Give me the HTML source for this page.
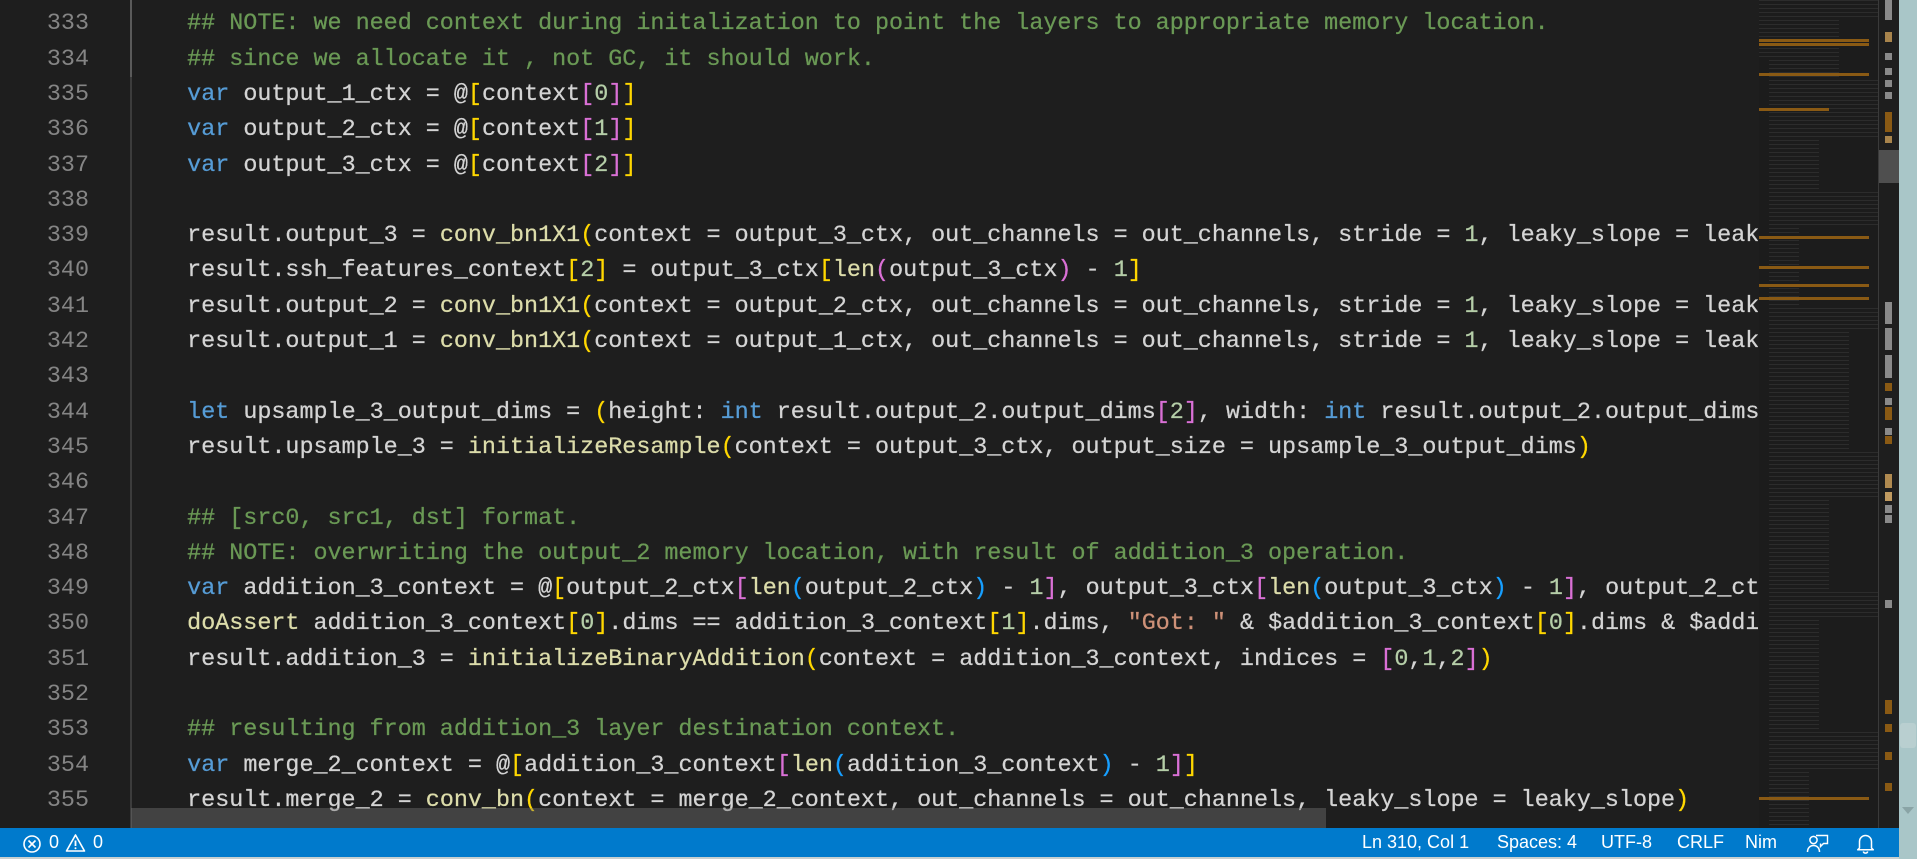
<!DOCTYPE html>
<html><head><meta charset="utf-8"><style>
*{margin:0;padding:0;box-sizing:border-box}
html,body{width:1917px;height:859px;overflow:hidden;background:#1e1e1e}
body{position:relative;font-family:"Liberation Mono",monospace}
#gut{position:absolute;left:0;top:0;width:131px;height:828px;background:#1e1e1e}
#div{position:absolute;left:130px;top:0;width:2px;height:828px;background:#3c3c3c}
#div2{position:absolute;left:130px;top:0;width:2px;height:77px;background:#5a5a5a}
.ln{position:absolute;left:0;top:7.4px;width:89px;text-align:right;color:#858585;font-size:23.4px;line-height:35.3px;font-family:"Liberation Mono",monospace}
#code{position:absolute;left:131px;top:7.4px;width:1627px;height:821px;overflow:hidden;font-size:23.4px;line-height:35.3px;color:#d4d4d4;white-space:pre;-webkit-text-stroke:0.25px}
.c{color:#6a9955}.k{color:#569cd6}.f{color:#dcdcaa}.n{color:#b5cea8}.s{color:#ce9178}
.g{color:#ffd700}.p{color:#da70d6}.b{color:#179fff}
#hs{position:absolute;left:131px;top:808px;width:1195px;height:20px;background:rgba(121,121,121,0.4)}
#mm{position:absolute;left:1759px;top:0;width:119px;height:828px;background:#1c1c1c;
background-image:repeating-linear-gradient(180deg,rgba(150,150,150,0.13) 0 1px,transparent 1px 4px);}
#mm .h{position:absolute;left:0;height:3px;background:#8a5a14}
#mm .cover{position:absolute;background:#1c1c1c}
#ovl{position:absolute;left:1878px;top:0;width:1px;height:828px;background:#3a3a3a}
#ov{position:absolute;left:1879px;top:0;width:20px;height:828px;background:#1e1e1e}
#ov i{position:absolute;left:6px;width:7px;display:block}
#rs{position:absolute;left:1899px;top:0;width:18px;height:859px;background:#a9c6c8}
#th{position:absolute;left:1900px;top:723px;width:16px;height:25px;background:#b9cfd0;border-radius:3px}
#sb{position:absolute;left:0;top:828px;width:1899px;height:29px;background:#007acc;color:#fff;font-family:"Liberation Sans",sans-serif;font-size:18px}
#sb span{position:absolute;top:4px}
#bot{position:absolute;left:0;top:857px;width:1899px;height:2px;background:#c8d0d0}
</style></head><body>
<div id="gut"></div>
<div class="ln">333<br>334<br>335<br>336<br>337<br>338<br>339<br>340<br>341<br>342<br>343<br>344<br>345<br>346<br>347<br>348<br>349<br>350<br>351<br>352<br>353<br>354<br>355</div>
<div id="div"></div><div id="div2"></div>
<div id="code"><span class="c">    ## NOTE: we need context during initalization to point the layers to appropriate memory location.</span>
<span class="c">    ## since we allocate it , not GC, it should work.</span>
    <span class="k">var</span> output_1_ctx = @<span class="g">[</span>context<span class="p">[</span><span class="n">0</span><span class="p">]</span><span class="g">]</span>
    <span class="k">var</span> output_2_ctx = @<span class="g">[</span>context<span class="p">[</span><span class="n">1</span><span class="p">]</span><span class="g">]</span>
    <span class="k">var</span> output_3_ctx = @<span class="g">[</span>context<span class="p">[</span><span class="n">2</span><span class="p">]</span><span class="g">]</span>

    result.output_3 = <span class="f">conv_bn1X1</span><span class="g">(</span>context = output_3_ctx, out_channels = out_channels, stride = <span class="n">1</span>, leaky_slope = leaky_slope<span class="g">)</span>
    result.ssh_features_context<span class="g">[</span><span class="n">2</span><span class="g">]</span> = output_3_ctx<span class="g">[</span><span class="f">len</span><span class="p">(</span>output_3_ctx<span class="p">)</span> - <span class="n">1</span><span class="g">]</span>
    result.output_2 = <span class="f">conv_bn1X1</span><span class="g">(</span>context = output_2_ctx, out_channels = out_channels, stride = <span class="n">1</span>, leaky_slope = leaky_slope<span class="g">)</span>
    result.output_1 = <span class="f">conv_bn1X1</span><span class="g">(</span>context = output_1_ctx, out_channels = out_channels, stride = <span class="n">1</span>, leaky_slope = leaky_slope<span class="g">)</span>

    <span class="k">let</span> upsample_3_output_dims = <span class="g">(</span>height: <span class="k">int</span> result.output_2.output_dims<span class="p">[</span><span class="n">2</span><span class="p">]</span>, width: <span class="k">int</span> result.output_2.output_dims<span class="p">[</span><span class="n">3</span><span class="p">]</span><span class="g">)</span>
    result.upsample_3 = <span class="f">initializeResample</span><span class="g">(</span>context = output_3_ctx, output_size = upsample_3_output_dims<span class="g">)</span>

<span class="c">    ## [src0, src1, dst] format.</span>
<span class="c">    ## NOTE: overwriting the output_2 memory location, with result of addition_3 operation.</span>
    <span class="k">var</span> addition_3_context = @<span class="g">[</span>output_2_ctx<span class="p">[</span><span class="f">len</span><span class="b">(</span>output_2_ctx<span class="b">)</span> - <span class="n">1</span><span class="p">]</span>, output_3_ctx<span class="p">[</span><span class="f">len</span><span class="b">(</span>output_3_ctx<span class="b">)</span> - <span class="n">1</span><span class="p">]</span>, output_2_ctx<span class="p">[</span><span class="f">len</span><span class="b">(</span>output_2_ctx<span class="b">)</span> - <span class="n">1</span><span class="p">]</span><span class="g">]</span>
    <span class="f">doAssert</span> addition_3_context<span class="g">[</span><span class="n">0</span><span class="g">]</span>.dims == addition_3_context<span class="g">[</span><span class="n">1</span><span class="g">]</span>.dims, <span class="s">"Got: "</span> &amp; $addition_3_context<span class="g">[</span><span class="n">0</span><span class="g">]</span>.dims &amp; $addition_3_context<span class="g">[</span><span class="n">1</span><span class="g">]</span>.dims
    result.addition_3 = <span class="f">initializeBinaryAddition</span><span class="g">(</span>context = addition_3_context, indices = <span class="p">[</span><span class="n">0</span>,<span class="n">1</span>,<span class="n">2</span><span class="p">]</span><span class="g">)</span>

<span class="c">    ## resulting from addition_3 layer destination context.</span>
    <span class="k">var</span> merge_2_context = @<span class="g">[</span>addition_3_context<span class="p">[</span><span class="f">len</span><span class="b">(</span>addition_3_context<span class="b">)</span> - <span class="n">1</span><span class="p">]</span><span class="g">]</span>
    result.merge_2 = <span class="f">conv_bn</span><span class="g">(</span>context = merge_2_context, out_channels = out_channels, leaky_slope = leaky_slope<span class="g">)</span></div>
<div id="hs"></div>
<div id="mm">
<div class="cover" style="left:80px;top:20px;width:39px;height:60px"></div>
<div class="cover" style="left:60px;top:140px;width:59px;height:50px"></div>
<div class="cover" style="left:40px;top:225px;width:79px;height:80px"></div>
<div class="cover" style="left:90px;top:330px;width:29px;height:120px"></div>
<div class="cover" style="left:70px;top:500px;width:49px;height:90px"></div>
<div class="cover" style="left:60px;top:620px;width:59px;height:110px"></div>
<div class="cover" style="left:50px;top:770px;width:69px;height:58px"></div>
<div class="cover" style="left:0;top:60px;width:10px;height:768px"></div>
<div class="h" style="top:39px;width:110px"></div>
<div class="h" style="top:43px;width:110px"></div>
<div class="h" style="top:73px;width:110px"></div>
<div class="h" style="top:108px;width:70px"></div>
<div class="h" style="top:236px;width:110px"></div>
<div class="h" style="top:266px;width:110px"></div>
<div class="h" style="top:284px;width:110px"></div>
<div class="h" style="top:297px;width:110px"></div>
<div class="h" style="top:797px;width:110px"></div>
</div>
<div id="ovl"></div>
<div id="ov">
<i style="top:0;height:20px;background:#8a8a8a"></i>
<i style="top:32px;height:10px;background:#a8844c"></i>
<i style="top:53px;height:7px;background:#8a8a8a"></i>
<i style="top:68px;height:7px;background:#8a8a8a"></i>
<i style="top:80px;height:7px;background:#8a8a8a"></i>
<i style="top:92px;height:7px;background:#8a8a8a"></i>
<i style="top:112px;height:20px;background:#8a5a14"></i>
<i style="top:136px;height:7px;background:#a8844c"></i>
<i style="top:150px;height:33px;background:#4f4f4f;left:0;width:20px"></i>
<i style="top:302px;height:22px;background:#8a8a8a"></i>
<i style="top:328px;height:22px;background:#8a8a8a"></i>
<i style="top:355px;height:23px;background:#8a8a8a"></i>
<i style="top:383px;height:8px;background:#8a5a14"></i>
<i style="top:398px;height:7px;background:#8a8a8a"></i>
<i style="top:407px;height:13px;background:#8a5a14"></i>
<i style="top:428px;height:7px;background:#8a8a8a"></i>
<i style="top:436px;height:8px;background:#8a5a14"></i>
<i style="top:474px;height:14px;background:#b08a50"></i>
<i style="top:492px;height:9px;background:#c09a60"></i>
<i style="top:505px;height:8px;background:#8a8a8a"></i>
<i style="top:515px;height:8px;background:#8a8a8a"></i>
<i style="top:600px;height:8px;background:#8a8a8a"></i>
<i style="top:700px;height:14px;background:#8a5a14"></i>
<i style="top:724px;height:8px;background:#8a5a14"></i>
<i style="top:752px;height:8px;background:#8a5a14"></i>
<i style="top:783px;height:8px;background:#8a5a14"></i>
</div>
<div id="rs"></div><div id="th"></div>
<div style="position:absolute;left:1902px;top:807px;width:0;height:0;border-left:6px solid transparent;border-right:6px solid transparent;border-top:7px solid #8aa4a6"></div>
<div id="sb">
<svg style="position:absolute;left:22px;top:6px" width="20" height="20" viewBox="0 0 20 20"><circle cx="10" cy="10" r="8" fill="none" stroke="#fff" stroke-width="1.6"/><path d="M6.5 6.5L13.5 13.5M13.5 6.5L6.5 13.5" stroke="#fff" stroke-width="1.6"/></svg>
<span style="left:49px">0</span>
<svg style="position:absolute;left:65px;top:5px" width="21" height="20" viewBox="0 0 21 20"><path d="M10.5 2L19.5 18H1.5Z" fill="none" stroke="#fff" stroke-width="1.6" stroke-linejoin="round"/><path d="M10.5 7.5V13" stroke="#fff" stroke-width="1.8"/><circle cx="10.5" cy="15.3" r="1" fill="#fff"/></svg>
<span style="left:93px">0</span>
<span style="left:1362px">Ln 310, Col 1</span>
<span style="left:1497px">Spaces: 4</span>
<span style="left:1601px">UTF-8</span>
<span style="left:1677px">CRLF</span>
<span style="left:1745px">Nim</span>
<svg style="position:absolute;left:1806px;top:5px" width="23" height="21" viewBox="0 0 23 21"><circle cx="7.5" cy="7" r="3.6" fill="none" stroke="#fff" stroke-width="1.5"/><path d="M1.5 19c0-4 2.6-6.5 6-6.5s6 2.5 6 6.5" fill="none" stroke="#fff" stroke-width="1.5"/><path d="M10 2.5h11.5v8h-4l-3 3v-3" fill="none" stroke="#fff" stroke-width="1.4"/></svg>
<svg style="position:absolute;left:1856px;top:4px" width="19" height="22" viewBox="0 0 19 22"><path d="M3.5 16V9.5a6 6 0 0 1 12 0V16l1.8 1.8H1.7Z" fill="none" stroke="#fff" stroke-width="1.5" stroke-linejoin="round"/><path d="M7.3 19.5a2.3 2.3 0 0 0 4.4 0" fill="none" stroke="#fff" stroke-width="1.5"/></svg>
</div>
<div id="bot"></div>
</body></html>
